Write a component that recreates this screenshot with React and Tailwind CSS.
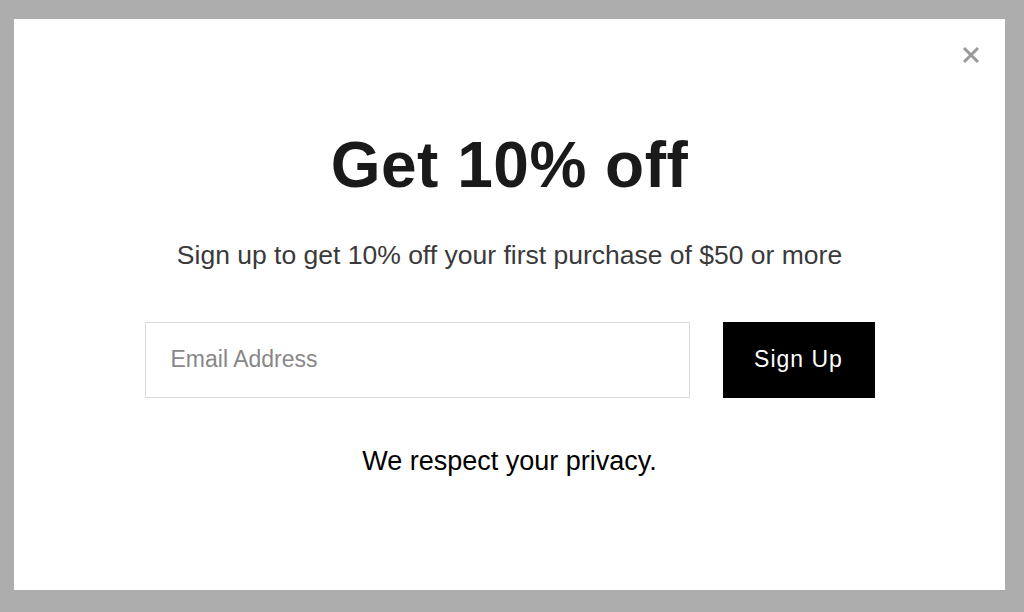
export default function App() {
    return (
        <div className="w-[1024px] h-[612px] bg-[#adadad] pt-[19px] pl-[14px]" style={{ fontFamily: '"Liberation Sans", Arial, sans-serif' }}>
            <div className="relative w-[991px] h-[571px] bg-white flex flex-col items-center">
                <button className="absolute right-[24px] top-[26px] w-[20px] h-[20px] flex items-center justify-center">
                    <svg width="18" height="18" viewBox="0 0 18 18">
                        <path d="M2 2L16 16M16 2L2 16" stroke="#9a9a9a" strokeWidth="3" />
                    </svg>
                </button>
                <h1 className="mt-[114px] text-[64px] leading-none font-bold text-[#1a1a1a] tracking-[0.5px]">Get 10% off</h1>
                <p className="mt-[45px] text-[26.5px] leading-none font-light text-[#3a3a3a]">
                    Sign up to get 10% off your first purchase of $50 or more
                </p>
                <div className="mt-[53px] flex gap-[33px]">
                    <input
                        type="text"
                        placeholder="Email Address"
                        className="w-[545px] h-[76px] border border-[#dcdcdc] px-[25px] text-[23px] font-light placeholder:text-[#888] outline-none"
                    />
                    <button className="w-[152px] h-[76px] bg-black text-white text-[23px] tracking-[1px]">Sign Up</button>
                </div>
                <p className="mt-[50px] text-[27px] leading-none text-black">We respect your privacy.</p>
            </div>
        </div>
    )
}
